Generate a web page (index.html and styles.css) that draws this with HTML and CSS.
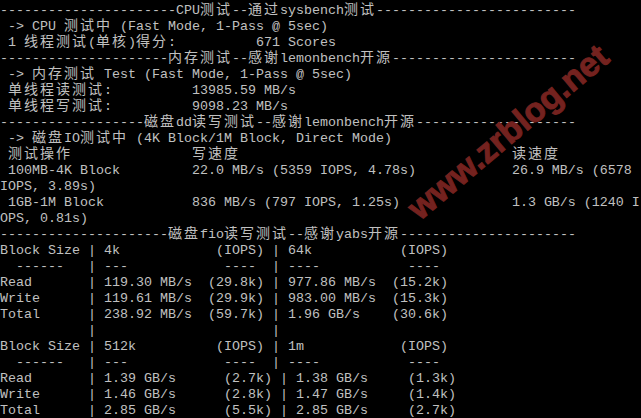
FILE: index.html
```html
<!DOCTYPE html>
<html lang="zh">
<head>
<meta charset="utf-8">
<title>Terminal</title>
<link rel="stylesheet" href="styles.css">
</head>
<body>
<div class="term">
<div class="l">----------------------CPU<span class="c">测试</span>--<span class="c">通过</span>sysbench<span class="c">测试</span>-------------------------</div>
<div class="l"> -&gt; CPU <span class="c">测试中</span> (Fast Mode, 1-Pass @ 5sec)</div>
<div class="l"> 1 <span class="c">线程测试</span>(<span class="c">单核</span>)<span class="c">得分</span>:          671 Scores</div>
<div class="l">---------------------<span class="c">内存测试</span>--<span class="c">感谢</span>lemonbench<span class="c">开源</span>-----------------------</div>
<div class="l"> -&gt; <span class="c">内存测试</span> Test (Fast Mode, 1-Pass @ 5sec)</div>
<div class="l"> <span class="c">单线程读测试</span>:          13985.59 MB/s</div>
<div class="l"> <span class="c">单线程写测试</span>:          9098.23 MB/s</div>
<div class="l">------------------<span class="c">磁盘</span>dd<span class="c">读写测试</span>--<span class="c">感谢</span>lemonbench<span class="c">开源</span>--------------------</div>
<div class="l"> -&gt; <span class="c">磁盘</span>IO<span class="c">测试中</span> (4K Block/1M Block, Direct Mode)</div>
<div class="l"> <span class="c">测试操作</span>               <span class="c">写速度</span>                                  <span class="c">读速度</span></div>
<div class="l"> 100MB-4K Block         22.0 MB/s (5359 IOPS, 4.78s)            26.9 MB/s (6578</div>
<div class="l">IOPS, 3.89s)</div>
<div class="l"> 1GB-1M Block           836 MB/s (797 IOPS, 1.25s)              1.3 GB/s (1240 I</div>
<div class="l">OPS, 0.81s)</div>
<div class="l">---------------------<span class="c">磁盘</span>fio<span class="c">读写测试</span>--<span class="c">感谢</span>yabs<span class="c">开源</span>----------------------</div>
<div class="l">Block Size | 4k            (IOPS) | 64k           (IOPS)</div>
<div class="l">  ------   | ---            ----  | ----           ----</div>
<div class="l">Read       | 119.30 MB/s  (29.8k) | 977.86 MB/s  (15.2k)</div>
<div class="l">Write      | 119.61 MB/s  (29.9k) | 983.00 MB/s  (15.3k)</div>
<div class="l">Total      | 238.92 MB/s  (59.7k) | 1.96 GB/s    (30.6k)</div>
<div class="l">           |                      |</div>
<div class="l">Block Size | 512k          (IOPS) | 1m            (IOPS)</div>
<div class="l">  ------   | ---            ----  | ----           ----</div>
<div class="l">Read       | 1.39 GB/s      (2.7k) | 1.38 GB/s     (1.3k)</div>
<div class="l">Write      | 1.46 GB/s      (2.8k) | 1.47 GB/s     (1.4k)</div>
<div class="l">Total      | 2.85 GB/s      (5.5k) | 2.85 GB/s     (2.7k)</div>
</div>
<div class="watermark">www.zrblog.net</div>
</body>
</html>
```
FILE: styles.css
```css
html, body {
  margin: 0;
  padding: 0;
  background: #000;
  width: 641px;
  height: 418px;
  overflow: hidden;
}
body {
  position: relative;
}
.term {
  padding-top: 3px;
  font-family: "Liberation Mono", "Courier New", monospace;
  font-size: 13.3333px;
  color: #c0c0c0;
}
.l {
  height: 16px;
  line-height: 16px;
  white-space: pre;
}
.c {
  font-family: "Noto Sans CJK SC", "Noto Sans", sans-serif;
  font-size: 14px;
  letter-spacing: 2px;
  line-height: 0;
}
.watermark {
  position: absolute;
  left: 508px;
  top: 132px;
  transform: translate(-50%, -50%) rotate(-40deg);
  font-family: "Liberation Sans", Arial, sans-serif;
  font-weight: bold;
  font-size: 34px;
  color: #74221f;
  -webkit-text-stroke: 1px #74221f;
  white-space: nowrap;
  pointer-events: none;
}
```
